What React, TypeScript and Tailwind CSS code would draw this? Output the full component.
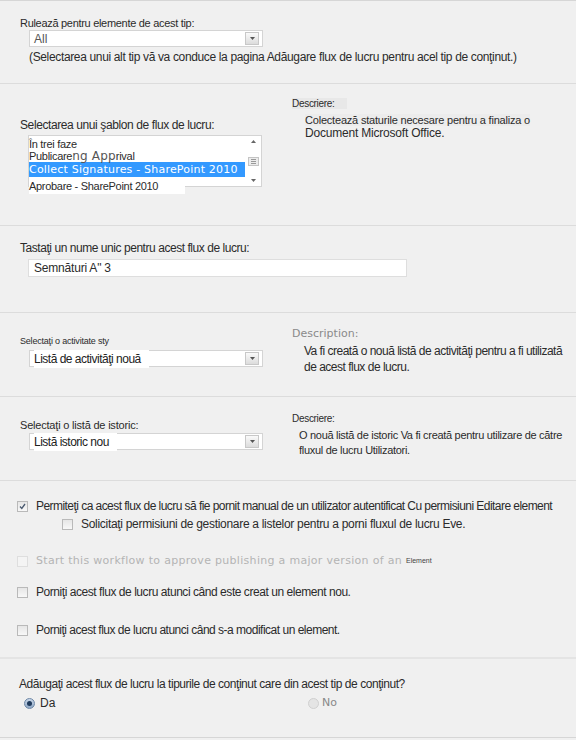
import React from "react";

const font = { fontFamily: '"Liberation Sans", Arial, sans-serif' };

const Arrow: React.FC = () => (
	<div className="w-[14px] h-[13px] border border-[#c8c8c8] bg-gradient-to-b from-[#fafafa] to-[#dcdcdc] flex items-center justify-center">
		<svg width="5" height="3" viewBox="0 0 5 3">
			<path d="M0 0h5L2.5 3z" fill="#555" />
		</svg>
	</div>
);

const Dropdown: React.FC<{ value: string; cut?: boolean }> = ({ value, cut }) => (
	<div className="ml-[9px] w-[234px] h-[17px] bg-white border border-[#d4d4d4] flex items-center justify-between pl-[4px] pr-[3px]">
		<span className={cut ? "text-[12px] text-[#222] bg-white pr-2 tracking-[-0.5px]" : "text-[12px] text-[#555]"}>{value}</span>
		<Arrow />
	</div>
);

const Check: React.FC<{ checked?: boolean; disabled?: boolean }> = ({ checked, disabled }) => (
	<div
		className={
			"w-[11px] h-[11px] border flex items-center justify-center shrink-0 " +
			(disabled ? "border-[#dedede] bg-[#f4f4f4]" : "border-[#b9b9b9] bg-gradient-to-b from-[#e6e6e6] to-[#f8f8f8]")
		}>
		{checked && (
			<svg width="7" height="7" viewBox="0 0 7 7">
				<path d="M1 3.5l1.8 2L6 1" stroke="#4a5a70" strokeWidth="1.3" fill="none" />
			</svg>
		)}
	</div>
);

const Radio: React.FC<{ on?: boolean }> = ({ on }) => (
	<div
		className={
			"w-[11px] h-[11px] rounded-full border flex items-center justify-center " +
			(on ? "border-[#6d87a6] bg-gradient-to-b from-[#c9d7e8] to-[#8fa8c6]" : "border-[#d0d0d0] bg-[#e4e4e4]")
		}>
		{on && <div className="w-[5px] h-[5px] rounded-full bg-[#1f3a5c]" />}
	</div>
);

const App: React.FC = () => {
	return (
		<div className="w-[576px] h-[740px] bg-[#f0f0f0] text-[#2b2b2b] overflow-hidden" style={font}>
			{/* run for items */}
			<div className="h-[83px] border-t border-[#d6d6d6] pt-[15px] pl-[20px]">
				<p className="text-[11px] leading-[14px] tracking-[-0.3px]">Rulează pentru elemente de acest tip:</p>
				<Dropdown value="All" />
				<p className="ml-[9px] mt-[3px] text-[12px] leading-[15px] tracking-[-0.35px]">
					(Selectarea unui alt tip vă va conduce la pagina Adăugare flux de lucru pentru acel tip de conţinut.)
				</p>
			</div>

			{/* template */}
			<div className="h-[142px] border-t border-[#dcdcdc] flex pl-[20px]">
				<div className="w-[272px] shrink-0 pt-[34px]">
					<p className="text-[12px] leading-[14px] tracking-[-0.4px]">Selectarea unui şablon de flux de lucru:</p>
					<div className="ml-[8px] mt-[3px] w-[234px] h-[52px] bg-white border border-[#d4d4d4] flex">
						<div className="flex-1 min-w-0 text-[11px] leading-[12px] pt-[2px]">
							<p className="tracking-[-0.3px]">În trei faze</p>
							<p className="tracking-[-0.3px] flex items-end">
								Publicare
								<span className="leading-[12px] text-[#555] tracking-[0.2px]" style={{ fontFamily: '"DejaVu Sans", sans-serif', fontSize: "12px" }}>
									ng App
								</span>
								rival
							</p>
							<p
								className="bg-[#3399ff] text-white text-[11px] leading-[15px] mr-[1px] whitespace-nowrap overflow-hidden tracking-[0.2px]"
								style={{ fontFamily: '"DejaVu Sans", sans-serif' }}>
								Collect Signatures - SharePoint 2010
							</p>
							<p className="tracking-[-0.3px] mt-[2px] bg-white w-[156px] h-[15px] leading-[14px]">Aprobare - SharePoint 2010</p>
						</div>
						<div className="w-[15px] shrink-0 flex flex-col items-center justify-between py-[4px]">
							<svg width="5" height="3" viewBox="0 0 5 3">
								<path d="M2.5 0L5 3H0z" fill="#666" />
							</svg>
							<div className="w-[11px] h-[9px] border border-[#c4c4c4] bg-[#ececec] flex flex-col justify-center items-center gap-[1px]">
								<div className="w-[5px] h-px bg-[#999]" />
								<div className="w-[5px] h-px bg-[#999]" />
								<div className="w-[5px] h-px bg-[#999]" />
							</div>
							<svg width="5" height="3" viewBox="0 0 5 3">
								<path d="M0 0h5L2.5 3z" fill="#666" />
							</svg>
						</div>
					</div>
				</div>
				<div className="pt-[14px]">
					<p className="text-[10px] leading-[12px] tracking-[-0.3px]">
						<span className="bg-[#e8e8e8] pr-[12px]">Descriere:</span>
					</p>
					<p className="ml-[13px] mt-[4px] text-[11px] leading-[13px] tracking-[-0.2px] w-[235px]">
						<span className="bg-[#ececec]">Colectează staturile necesare pentru a finaliza o</span>
						<br />
						<span className="text-[12px]">Document Microsoft Office.</span>
					</p>
				</div>
			</div>

			{/* name */}
			<div className="h-[87px] border-t border-[#dcdcdc] pt-[15px] pl-[20px]">
				<p className="text-[12px] leading-[14px] tracking-[-0.45px]">Tastaţi un nume unic pentru acest flux de lucru:</p>
				<div className="ml-[8px] mt-[4px] w-[379px] h-[18px] bg-white border border-[#dedede] flex items-center pl-[5px]">
					<span className="text-[12px] tracking-[-0.2px]">Semnături A" 3</span>
				</div>
			</div>

			{/* task list */}
			<div className="h-[84px] border-t border-[#dcdcdc] flex pl-[20px]">
				<div className="w-[272px] shrink-0 pt-[22px]">
					<p className="text-[9px] leading-[12px] tracking-[-0.2px]">Selectaţi o activitate sty</p>
					<div className="mt-[3px]">
						<Dropdown value="Listă de activităţi nouă" cut />
					</div>
				</div>
				<div className="pt-[14px]">
					<p className="text-[11px] leading-[14px] text-[#8a8a8a]" style={{ fontFamily: '"DejaVu Sans", sans-serif' }}>
						Description:
					</p>
					<p className="ml-[12px] mt-[2px] text-[12px] leading-[16px] tracking-[-0.5px] w-[272px]">
						Va fi creată o nouă listă de activităţi pentru a fi utilizată de acest flux de lucru.
					</p>
				</div>
			</div>

			{/* history list */}
			<div className="h-[84px] border-t border-[#dcdcdc] flex pl-[20px]">
				<div className="w-[272px] shrink-0 pt-[21px]">
					<p className="text-[11px] leading-[14px] tracking-[-0.2px]">Selectaţi o listă de istoric:</p>
					<div className="mt-[1px]">
						<Dropdown value="Listă istoric nou" cut />
					</div>
				</div>
				<div className="pt-[16px]">
					<p className="text-[10px] leading-[12px] tracking-[-0.3px]">Descriere:</p>
					<p className="ml-[7px] mt-[3px] text-[11px] leading-[15px] tracking-[-0.3px] w-[278px]">
						O nouă listă de istoric Va fi creată pentru utilizare de către fluxul de lucru Utilizatori.
					</p>
				</div>
			</div>

			{/* start options */}
			<div className="h-[177px] border-t border-[#dcdcdc] pt-[18px] pl-[17px] flex flex-col">
				<div className="flex items-center gap-[8px] h-[14px]">
					<Check checked />
					<span className="text-[12px] tracking-[-0.55px] whitespace-nowrap">
						Permiteţi ca acest flux de lucru să fie pornit manual de un utilizator autentificat Cu permisiuni Editare element
					</span>
				</div>
				<div className="flex items-center gap-[8px] h-[14px] mt-[4px] ml-[45px]">
					<Check />
					<span className="text-[12px] tracking-[-0.3px]">Solicitaţi permisiuni de gestionare a listelor pentru a porni fluxul de lucru Eve.</span>
				</div>
				<div className="flex items-center gap-[8px] h-[14px] mt-[23px]">
					<Check disabled />
					<span className="text-[11px] text-[#b4b4b4] tracking-[0.3px]" style={{ fontFamily: '"DejaVu Sans", sans-serif' }}>
						Start this workflow to approve publishing a major version of an
					</span>
					<span className="text-[7px] text-[#444] -ml-[4px]">Element</span>
				</div>
				<div className="flex items-center gap-[8px] h-[14px] mt-[17px]">
					<Check />
					<span className="text-[12px] tracking-[-0.45px]">Porniţi acest flux de lucru atunci când este creat un element nou.</span>
				</div>
				<div className="flex items-center gap-[8px] h-[14px] mt-[24px]">
					<Check />
					<span className="text-[12px] tracking-[-0.5px]">Porniţi acest flux de lucru atunci când s-a modificat un element.</span>
				</div>
			</div>

			{/* add to content types */}
			<div className="h-[81px] border-t-2 border-[#e4e4e4] pt-[18px] pl-[19px] border-b border-b-[#d6d6d6]">
				<p className="text-[12px] leading-[14px] tracking-[-0.45px]">
					Adăugaţi acest flux de lucru la tipurile de conţinut care din acest tip de conţinut?
				</p>
				<div className="flex items-center mt-[5px] h-[14px]">
					<div className="w-[289px] flex items-center gap-[5px] pl-[5px]">
						<Radio on />
						<span className="text-[12px]">Da</span>
					</div>
					<div className="flex items-center gap-[3px]">
						<Radio />
						<span className="text-[11px] text-[#888]" style={{ fontFamily: '"DejaVu Sans", sans-serif' }}>
							No
						</span>
					</div>
				</div>
			</div>
		</div>
	);
};

export default App;
